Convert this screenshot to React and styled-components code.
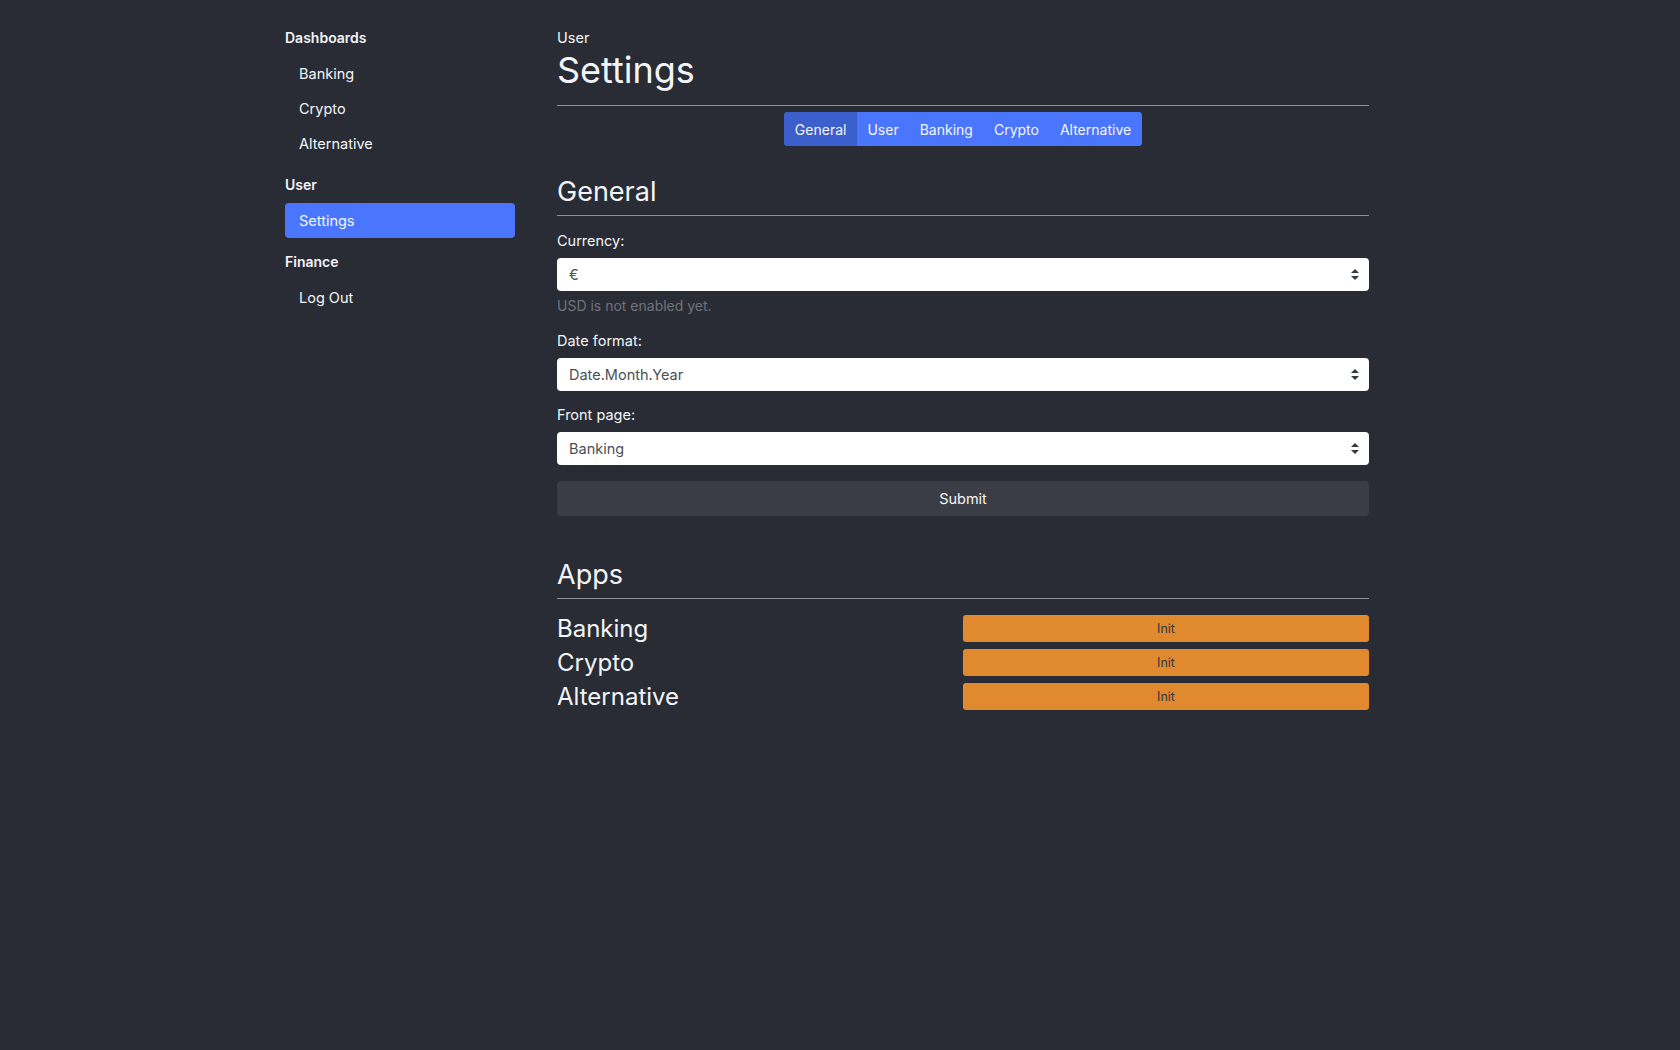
import React from 'react';
import styled, { createGlobalStyle } from 'styled-components';

const GlobalStyle = createGlobalStyle`
  html, body {
    margin: 0;
    padding: 0;
    background: #292c35;
  }
  body {
    font-family: Inter, "Noto Sans", "Liberation Sans", sans-serif;
    color: #f4f5f7;
  }
`;

const Page = styled.div`
  display: flex;
  align-items: flex-start;
  gap: 42px;
  padding: 26px 0 0 285px;
  min-height: 1024px;
`;

const Sidebar = styled.nav`
  width: 230px;
  display: flex;
  flex-direction: column;
`;

const NavHeading = styled.div`
  font-size: 14px;
  font-weight: 600;
  line-height: 24px;
  margin: ${(p) => (p.first ? '0' : '12px')} 0 6px;
`;

const NavItem = styled.a`
  display: block;
  height: 35px;
  line-height: 35px;
  padding-left: 14px;
  font-size: 14.5px;
  color: #f4f5f7;
  border-radius: 4px;
  background: ${(p) => (p.active ? '#4a76fd' : 'transparent')};
  text-decoration: none;
  cursor: pointer;
`;

const Main = styled.main`
  width: 812px;
  display: flex;
  flex-direction: column;
`;

const Crumb = styled.div`
  font-size: 14.5px;
  line-height: 24px;
`;

const Title = styled.h1`
  margin: -2px 0 0;
  font-size: 36px;
  font-weight: 400;
  line-height: 44px;
`;

const Rule = styled.hr`
  margin: ${(p) => p.m || '0'};
  border: 0;
  border-top: 1px solid #8b8e96;
  height: 0;
`;

const TabBar = styled.div`
  display: flex;
  justify-content: center;
  margin-top: 6px;
`;

const TabGroup = styled.div`
  display: flex;
  border-radius: 4px;
  overflow: hidden;
  background: #4a76fd;
`;

const Tab = styled.button`
  height: 34px;
  padding: 0 10.5px;
  border: 0;
  font-family: inherit;
  font-size: 14px;
  color: #f4f5f7;
  background: ${(p) => (p.active ? '#3b5fcc' : '#4a76fd')};
  cursor: pointer;
`;

const SectionTitle = styled.h2`
  margin: ${(p) => p.top} 0 0;
  font-size: 27px;
  font-weight: 400;
  line-height: 34px;
`;

const Label = styled.label`
  display: block;
  font-size: 14.5px;
  line-height: 20px;
  margin: ${(p) => p.top || '14px'} 0 7px;
`;

const SelectBox = styled.div`
  position: relative;
  display: flex;
  align-items: center;
  height: 33px;
  padding: 0 12px;
  background: #fff;
  border-radius: 4px;
  color: #495057;
  font-size: 14.5px;
`;

const Arrows = styled.svg`
  position: absolute;
  right: 10px;
  top: 11px;
`;

const Help = styled.div`
  font-size: 14px;
  color: #6f737b;
  margin-top: 5px;
  line-height: 20px;
`;

const SubmitButton = styled.button`
  margin-top: 16px;
  height: 35px;
  border: 0;
  border-radius: 4px;
  background: #3a3d46;
  color: #f4f5f7;
  font-family: inherit;
  font-size: 14.5px;
  cursor: pointer;
`;

const AppList = styled.div`
  display: flex;
  flex-direction: column;
  gap: 7px;
  margin-top: 16px;
`;

const AppRow = styled.div`
  display: grid;
  grid-template-columns: 1fr 406px;
  align-items: center;
  height: 27px;
`;

const AppName = styled.div`
  font-size: 24px;
  line-height: 27px;
`;

const InitButton = styled.button`
  height: 27px;
  border: 0;
  border-radius: 3px;
  background: #e0892e;
  color: #33363c;
  font-family: inherit;
  font-size: 12.5px;
  cursor: pointer;
`;

const Select = ({ value }) => (
  <SelectBox>
    {value}
    <Arrows width="8" height="11" viewBox="0 0 8 11">
      <path d="M4 0 L8 4 H0 Z" fill="#343a40" />
      <path d="M4 11 L8 7 H0 Z" fill="#343a40" />
    </Arrows>
  </SelectBox>
);

const App = () => {
  const tabs = ['General', 'User', 'Banking', 'Crypto', 'Alternative'];
  const apps = ['Banking', 'Crypto', 'Alternative'];
  return (
    <>
      <GlobalStyle />
      <Page>
        <Sidebar>
          <NavHeading first>Dashboards</NavHeading>
          <NavItem>Banking</NavItem>
          <NavItem>Crypto</NavItem>
          <NavItem>Alternative</NavItem>
          <NavHeading>User</NavHeading>
          <NavItem active>Settings</NavItem>
          <NavHeading>Finance</NavHeading>
          <NavItem>Log Out</NavItem>
        </Sidebar>
        <Main>
          <Crumb>User</Crumb>
          <Title>Settings</Title>
          <Rule m="13px 0 0" />
          <TabBar>
            <TabGroup>
              {tabs.map((t, i) => (
                <Tab key={t} active={i === 0}>
                  {t}
                </Tab>
              ))}
            </TabGroup>
          </TabBar>
          <SectionTitle top="29px">General</SectionTitle>
          <Rule m="6px 0 0" />
          <Label top="15px">Currency:</Label>
          <Select value="€" />
          <Help>USD is not enabled yet.</Help>
          <Label top="15px">Date format:</Label>
          <Select value="Date.Month.Year" />
          <Label top="14px">Front page:</Label>
          <Select value="Banking" />
          <SubmitButton>Submit</SubmitButton>
          <SectionTitle top="42px">Apps</SectionTitle>
          <Rule m="6px 0 0" />
          <AppList>
            {apps.map((a) => (
              <AppRow key={a}>
                <AppName>{a}</AppName>
                <InitButton>Init</InitButton>
              </AppRow>
            ))}
          </AppList>
        </Main>
      </Page>
    </>
  );
};

export default App;
